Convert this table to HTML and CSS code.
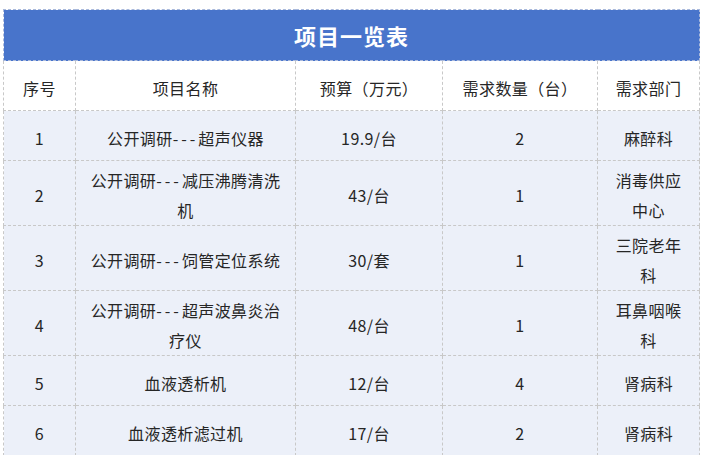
FILE: index.html
```html
<!DOCTYPE html>
<html lang="zh-CN">
<head>
<meta charset="utf-8">
<title>项目一览表</title>
<link rel="stylesheet" href="styles.css">
</head>
<body>
<div class="page">
<table class="grid">
  <colgroup>
    <col class="c-no"><col class="c-name"><col class="c-budget"><col class="c-qty"><col class="c-dept">
  </colgroup>
  <thead>
    <tr><th colspan="5" class="title">项目一览表</th></tr>
    <tr class="head">
      <th>序号</th><th>项目名称</th><th>预算（万元）</th><th>需求数量（台）</th><th>需求部门</th>
    </tr>
  </thead>
  <tbody>
    <tr><td>1</td><td>公开调研<span class="dash">---</span>超声仪器</td><td>19.9/台</td><td>2</td><td>麻醉科</td></tr>
    <tr><td>2</td><td>公开调研<span class="dash">---</span>减压沸腾清洗机</td><td>43/台</td><td>1</td><td>消毒供应中心</td></tr>
    <tr><td>3</td><td>公开调研<span class="dash">---</span>饲管定位系统</td><td>30/套</td><td>1</td><td>三院老年科</td></tr>
    <tr><td>4</td><td>公开调研<span class="dash">---</span>超声波鼻炎治疗仪</td><td>48/台</td><td>1</td><td>耳鼻咽喉科</td></tr>
    <tr><td>5</td><td>血液透析机</td><td>12/台</td><td>4</td><td>肾病科</td></tr>
    <tr><td>6</td><td>血液透析滤过机</td><td>17/台</td><td>2</td><td>肾病科</td></tr>
    <tr><td></td><td></td><td></td><td></td><td></td></tr>
  </tbody>
</table>
</div>
</body>
</html>
```
FILE: styles.css
```css
html, body {
  margin: 0;
  padding: 0;
  background: #ffffff;
}
.page {
  padding: 9px 5px 0 3px;
  font-family: "Noto Sans CJK SC", "Noto Sans", sans-serif;
  color: #262626;
}
.grid {
  width: 696px;
  border-collapse: collapse;
  table-layout: fixed;
}
.c-no { width: 72px; }
.c-name { width: 220px; }
.c-budget { width: 147px; }
.c-qty { width: 155px; }
.c-dept { width: 102px; }
.grid th, .grid td {
  border: 1px dashed #c8c8c8;
  font-size: 16px;
  font-weight: normal;
  letter-spacing: 0.4px;
  line-height: 30px;
  height: 50px;
  padding: 4px 12px 0;
  text-align: center;
  vertical-align: middle;
  box-sizing: border-box;
}
.dash {
  letter-spacing: 3px;
}
.grid th.title {
  background: #4874cb;
  color: #ffffff;
  font-size: 22px;
  font-weight: bold;
  height: 51px;
  padding: 0;
  line-height: 30px;
  border-color: #a9b9dc;
  letter-spacing: 1px;
}
.grid tbody td {
  background: #ecf0f9;
}
```
